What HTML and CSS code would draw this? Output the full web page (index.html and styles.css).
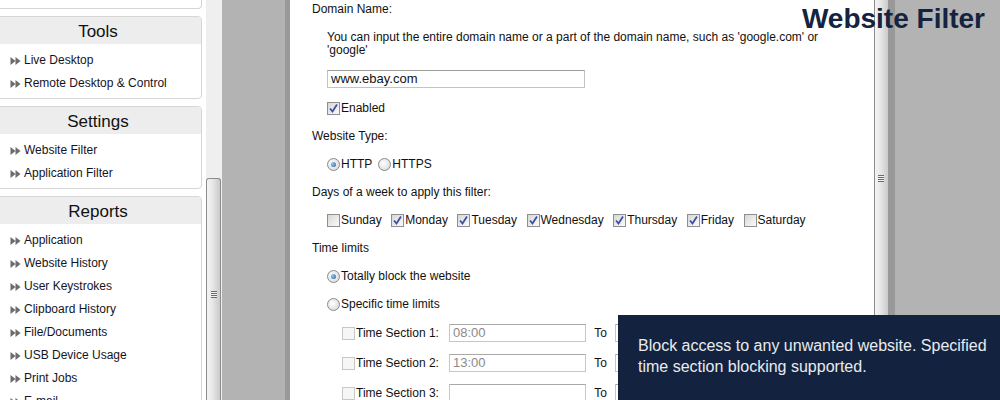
FILE: index.html
```html
<!DOCTYPE html>
<html lang="en">
<head>
    <meta charset="UTF-8">
    <title>Website Filter</title>
    <link rel="stylesheet" href="styles.css">
</head>
<body>
    <div class="page">
        <div class="sidebar">
            <div class="panel panel-end"></div>

            <div class="panel">
                <div class="panel-head">Tools</div>
                <ul class="menu">
                    <li><svg class="arr" viewBox="0 0 10 8"><path d="M0 0L5 4L0 8Z M5 0L10 4L5 8Z"/></svg>Live Desktop</li>
                    <li><svg class="arr" viewBox="0 0 10 8"><path d="M0 0L5 4L0 8Z M5 0L10 4L5 8Z"/></svg>Remote Desktop &amp; Control</li>
                </ul>
            </div>

            <div class="panel">
                <div class="panel-head">Settings</div>
                <ul class="menu">
                    <li><svg class="arr" viewBox="0 0 10 8"><path d="M0 0L5 4L0 8Z M5 0L10 4L5 8Z"/></svg>Website Filter</li>
                    <li><svg class="arr" viewBox="0 0 10 8"><path d="M0 0L5 4L0 8Z M5 0L10 4L5 8Z"/></svg>Application Filter</li>
                </ul>
            </div>

            <div class="panel">
                <div class="panel-head">Reports</div>
                <ul class="menu">
                    <li><svg class="arr" viewBox="0 0 10 8"><path d="M0 0L5 4L0 8Z M5 0L10 4L5 8Z"/></svg>Application</li>
                    <li><svg class="arr" viewBox="0 0 10 8"><path d="M0 0L5 4L0 8Z M5 0L10 4L5 8Z"/></svg>Website History</li>
                    <li><svg class="arr" viewBox="0 0 10 8"><path d="M0 0L5 4L0 8Z M5 0L10 4L5 8Z"/></svg>User Keystrokes</li>
                    <li><svg class="arr" viewBox="0 0 10 8"><path d="M0 0L5 4L0 8Z M5 0L10 4L5 8Z"/></svg>Clipboard History</li>
                    <li><svg class="arr" viewBox="0 0 10 8"><path d="M0 0L5 4L0 8Z M5 0L10 4L5 8Z"/></svg>File/Documents</li>
                    <li><svg class="arr" viewBox="0 0 10 8"><path d="M0 0L5 4L0 8Z M5 0L10 4L5 8Z"/></svg>USB Device Usage</li>
                    <li><svg class="arr" viewBox="0 0 10 8"><path d="M0 0L5 4L0 8Z M5 0L10 4L5 8Z"/></svg>Print Jobs</li>
                    <li><svg class="arr" viewBox="0 0 10 8"><path d="M0 0L5 4L0 8Z M5 0L10 4L5 8Z"/></svg>E-mail</li>
                </ul>
            </div>
        </div>

        <div class="scrollbar side-scroll">
            <div class="scroll-space"></div>
            <div class="thumb"><span class="grip"></span></div>
        </div>

        <div class="gray-gap"></div>
        <div class="shade"></div>

        <div class="content">
            <div class="form">
                <div class="title-row">Domain Name:</div>
                <p class="help">You can input the entire domain name or a part of the domain name, such as 'google.com' or 'google'</p>
                <div class="domain"><span class="field wide">www.ebay.com</span></div>
                <div class="row sub"><span class="cb on"><svg viewBox="0 0 11 11"><path d="M2 5.5L4.5 8.5L9 1.5"/></svg></span>Enabled</div>

                <div class="row">Website Type:</div>
                <div class="row sub opts types">
                    <label class="opt"><span class="rb on"></span>HTTP</label>
                    <label class="opt"><span class="rb"></span>HTTPS</label>
                </div>

                <div class="row">Days of a week to apply this filter:</div>
                <div class="row sub opts days">
                    <label class="opt"><span class="cb"></span>Sunday</label>
                    <label class="opt"><span class="cb on"><svg viewBox="0 0 11 11"><path d="M2 5.5L4.5 8.5L9 1.5"/></svg></span>Monday</label>
                    <label class="opt"><span class="cb on"><svg viewBox="0 0 11 11"><path d="M2 5.5L4.5 8.5L9 1.5"/></svg></span>Tuesday</label>
                    <label class="opt"><span class="cb on"><svg viewBox="0 0 11 11"><path d="M2 5.5L4.5 8.5L9 1.5"/></svg></span>Wednesday</label>
                    <label class="opt"><span class="cb on"><svg viewBox="0 0 11 11"><path d="M2 5.5L4.5 8.5L9 1.5"/></svg></span>Thursday</label>
                    <label class="opt"><span class="cb on"><svg viewBox="0 0 11 11"><path d="M2 5.5L4.5 8.5L9 1.5"/></svg></span>Friday</label>
                    <label class="opt"><span class="cb"></span>Saturday</label>
                </div>

                <div class="row">Time limits</div>
                <div class="row sub"><span class="rb on"></span>Totally block the website</div>
                <div class="row sub"><span class="rb"></span>Specific time limits</div>

                <div class="section">
                    <span class="sec-label"><span class="cb off"></span>Time Section 1:</span>
                    <span class="field time dim">08:00</span>
                    <span class="to">To</span>
                    <span class="field time dim">12:00</span>
                </div>
                <div class="section">
                    <span class="sec-label"><span class="cb off"></span>Time Section 2:</span>
                    <span class="field time dim">13:00</span>
                    <span class="to">To</span>
                    <span class="field time dim">17:00</span>
                </div>
                <div class="section">
                    <span class="sec-label"><span class="cb off"></span>Time Section 3:</span>
                    <span class="field time"></span>
                    <span class="to">To</span>
                    <span class="field time"></span>
                </div>
            </div>
        </div>

        <div class="scrollbar main-scroll">
            <div class="thumb full"><span class="grip"></span></div>
        </div>
        <div class="shade right"></div>
    </div>

    <h1 class="page-title">Website Filter</h1>

    <div class="note">
        Block access to any unwanted website. Specified time section blocking supported.
    </div>
</body>
</html>
```

FILE: styles.css
```css
body {
    margin: 0;
    width: 1000px;
    height: 400px;
    overflow: hidden;
    position: relative;
    background: #b3b3b3;
    font-family: "Liberation Sans", Arial, sans-serif;
    font-size: 12px;
    color: #111;
}
.page {
    display: flex;
    height: 400px;
}

/* left menu */
.sidebar {
    width: 206px;
    flex: none;
    background: #fff;
    overflow: hidden;
    display: flex;
    flex-direction: column;
    gap: 7px;
}
.panel {
    margin-left: -6px;
    width: 206px;
    border: 1px solid #d6d6d6;
    border-radius: 4px;
    background: #fff;
    flex: none;
}
.panel-end {
    height: 8px;
    border-top: none;
    border-radius: 0 0 4px 4px;
}
.panel-head {
    height: 27px;
    line-height: 29px;
    background: #ededed;
    text-align: center;
    font-size: 17px;
    color: #111;
    border-radius: 3px 3px 0 0;
}
.menu {
    list-style: none;
    margin: 0;
    padding: 5px 0 3px;
}
.menu li {
    height: 23px;
    line-height: 23px;
    padding-left: 15px;
    display: flex;
    align-items: center;
    color: #14141e;
}
.arr {
    width: 11px;
    height: 8px;
    margin-right: 3px;
    fill: #6c6c6c;
}

/* scrollbars */
.scrollbar {
    flex: none;
    display: flex;
    flex-direction: column;
}
.side-scroll {
    width: 16px;
    background: #efefef;
}
.scroll-space {
    height: 178px;
}
.thumb {
    flex: 1;
    margin-right: 1px;
    border: 1px solid #8c8c8c;
    border-bottom: none;
    border-radius: 3px 3px 0 0;
    background: linear-gradient(to right, #f4f4f4, #e6e6e6 45%, #c9c9cf);
    position: relative;
}
.side-scroll .grip {
    top: 112px;
}
.grip {
    position: absolute;
    left: 4px;
    width: 6px;
    height: 7px;
    background: repeating-linear-gradient(to bottom, #6a6a6a 0 1px, #f2f2f2 1px 2px);
}
.main-scroll {
    width: 15px;
    background: #efefef;
}
.main-scroll .thumb {
    border-top: none;
    border-radius: 0;
    border-right: 1px solid #9a9a9a;
    margin-right: 0;
}
.main-scroll .grip {
    top: 175px;
    left: 3px;
}

.gray-gap {
    width: 63px;
    flex: none;
}
.shade {
    width: 5px;
    flex: none;
    background: #999;
}
.shade.right {
    width: 6px;
}

/* form */
.content {
    width: 584px;
    flex: none;
    background: #fff;
}
.form {
    padding-left: 22px;
}
.title-row {
    height: 18px;
    line-height: 18px;
}
.help {
    margin: 13px 40px 0 15px;
    line-height: 13px;
}
.domain {
    margin: 13px 0 0 15px;
    height: 18px;
}
.field {
    display: inline-block;
    box-sizing: border-box;
    height: 18px;
    line-height: 16px;
    border: 1px solid #c3c3c3;
    border-top-color: #9c9c9c;
    padding: 0 3px;
    font-size: 13px;
    background: #fff;
    vertical-align: middle;
}
.field.wide {
    width: 258px;
}
.row {
    height: 28px;
    display: flex;
    align-items: center;
}
.domain + .row {
    margin-top: 6px;
}
.sub {
    padding-left: 15px;
}
.opts {
    gap: 9.5px;
}
.opts.types {
    gap: 6px;
}
.opt {
    display: flex;
    align-items: center;
}

.cb {
    width: 11px;
    height: 11px;
    border: 1px solid #8f8f8f;
    background: linear-gradient(135deg, #d8d8d2, #fafafa);
    display: inline-block;
    flex: none;
    margin-right: 1px;
}
.cb svg {
    display: block;
    width: 11px;
    height: 11px;
    fill: none;
    stroke: #3d4fa6;
    stroke-width: 1.8;
}
.cb.off {
    border-color: #c7c7c7;
    background: #f6f6f6;
}
.rb {
    width: 11px;
    height: 11px;
    border: 1px solid #8a8a8a;
    border-radius: 50%;
    background: radial-gradient(circle at 40% 40%, #fff, #d2d2d2);
    flex: none;
    margin-right: 1px;
    position: relative;
}
.rb.on::after {
    content: "";
    position: absolute;
    left: 3px;
    top: 3px;
    width: 5px;
    height: 5px;
    border-radius: 50%;
    background: radial-gradient(circle at 35% 35%, #9fc6f0, #215a9e);
}

.section {
    height: 30px;
    display: flex;
    align-items: center;
    padding-left: 30px;
    font-size: 12px;
}
.section:first-of-type {
    margin-top: 1px;
}
.sec-label {
    width: 107px;
    display: flex;
    align-items: center;
}
.field.time {
    width: 137px;
    border-color: #c6c6c6;
    border-top-color: #a9a9a9;
}
.field.dim {
    color: #8a8a8a;
}
.to {
    width: 29px;
    text-align: center;
}

/* overlays */
.page-title {
    position: absolute;
    top: 3px;
    right: 15px;
    margin: 0;
    font-size: 28px;
    line-height: 32px;
    color: #14233f;
    font-weight: bold;
}
.note {
    position: absolute;
    left: 618px;
    top: 315px;
    width: 382px;
    height: 85px;
    box-sizing: border-box;
    padding: 20px 8px 0 20px;
    background: #13233f;
    color: #e9ebee;
    font-size: 16px;
    line-height: 21px;
}
```
